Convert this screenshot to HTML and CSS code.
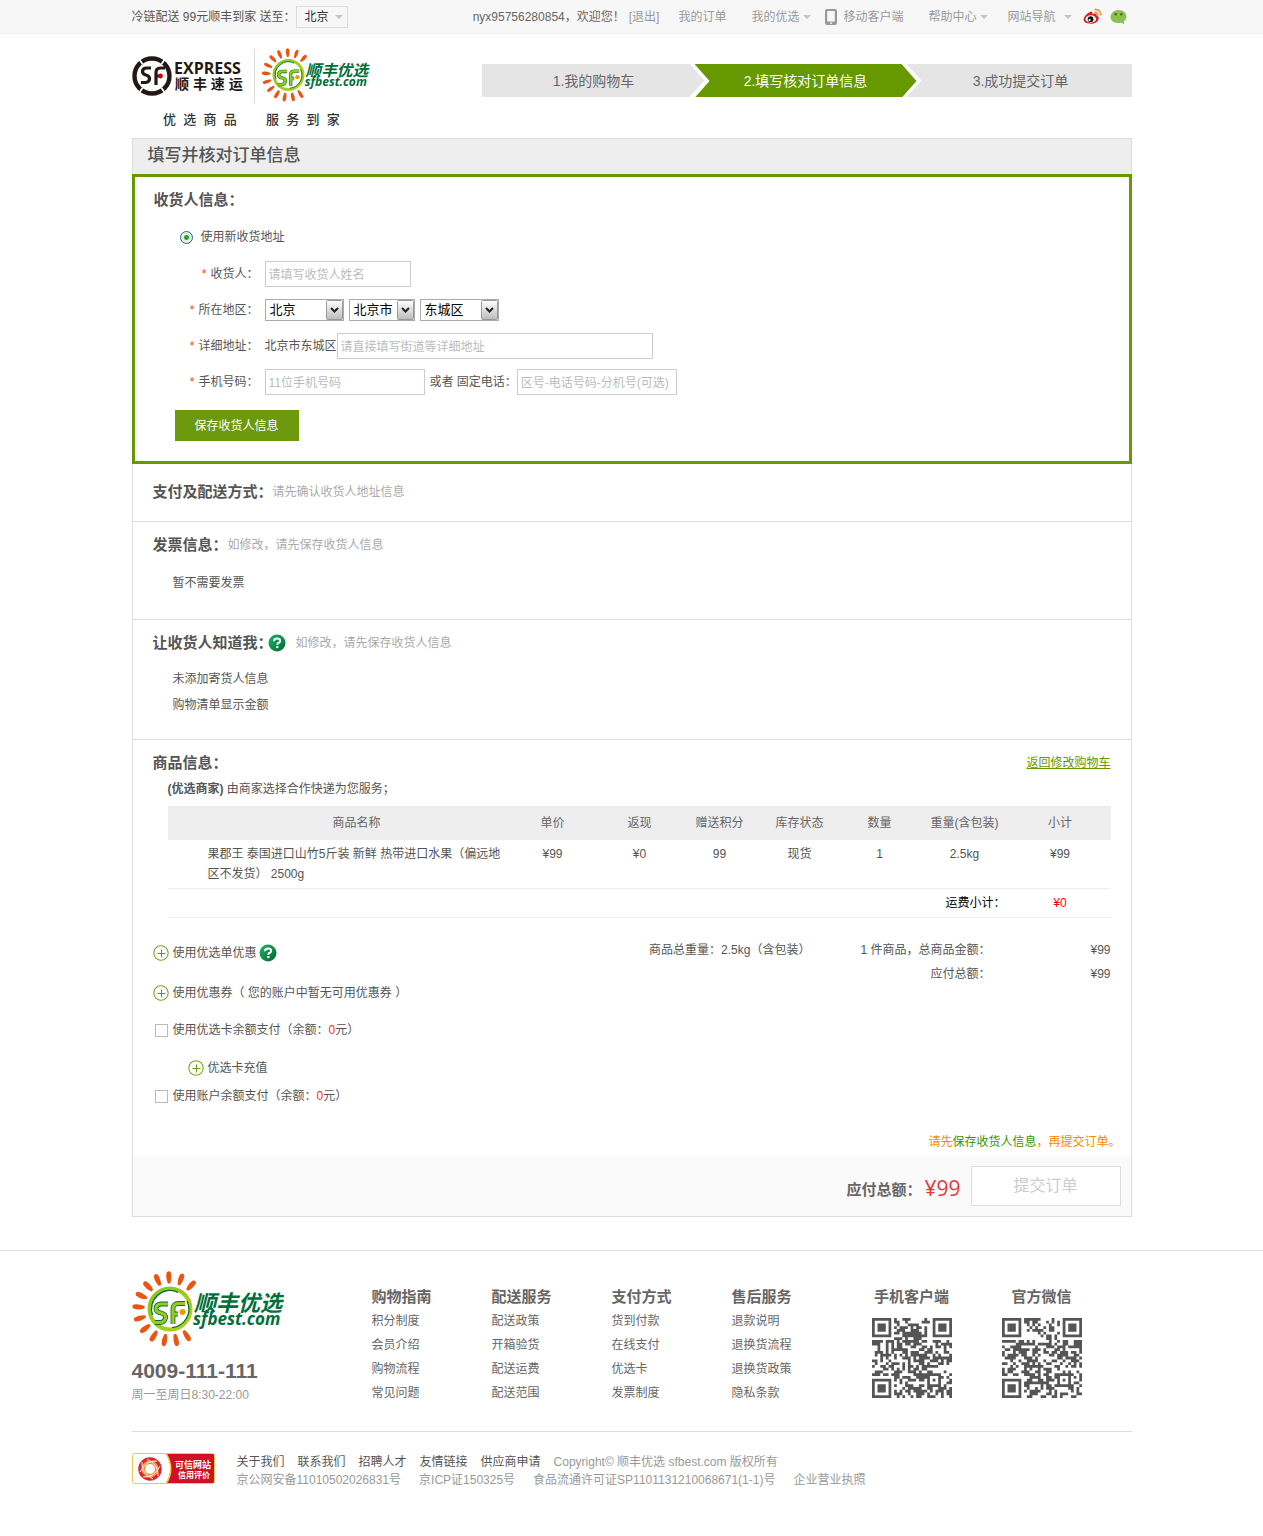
FILE: index.html
```html
<!DOCTYPE html>
<html lang="zh-CN">
<head>
<meta charset="utf-8">
<meta name="viewport" content="width=device-width, initial-scale=1">
<title>填写核对订单信息 - 顺丰优选</title>
<link rel="stylesheet" href="styles.css">
</head>
<body>
<svg class="defs" width="0" height="0" aria-hidden="true">
  <defs>
    <linearGradient id="help-fill" x1="0" y1="0" x2="1" y2="1"><stop offset="0" stop-color="#1cb56c"/><stop offset="1" stop-color="#04672f"/></linearGradient>
    <linearGradient id="leaf" x1="0" y1="0" x2="1" y2="1"><stop offset="0" stop-color="#8dc21f"/><stop offset="1" stop-color="#b5d215"/></linearGradient>
    <path id="ray" d="M-1.200 -25.500 Q-3.600 -32 -2 -36.500 Q0 -39 2 -36.500 Q3.400 -32 1.200 -25.500 Z" fill="#ea5514"/>
    <symbol id="help" viewBox="0 0 18 18">
      <circle cx="9" cy="9" r="8.5" fill="url(#help-fill)"/>
      <path d="M6 7.2 Q6 4.6 9.1 4.6 Q12.1 4.6 12.1 6.9 Q12.1 8.2 10.4 9 Q9.3 9.6 9.3 10.8" fill="none" stroke="#fff" stroke-width="2"/>
      <rect x="8.2" y="12" width="2.2" height="2.1" fill="#fff"/>
    </symbol>
    <symbol id="plus" viewBox="0 0 16 16">
      <circle cx="8" cy="8" r="7.2" fill="none" stroke="#7aa81c" stroke-width="1.1"/>
      <path d="M4.5 8.5h8M8.5 4.5v8" stroke="#6a9c10" stroke-width="1"/>
    </symbol>
    <path id="sf-mark" d="M-2 -5H-9Q-14 -4.500 -14 -0.500Q-14 3 -9 4Q-4 5 -4.500 9Q-5.500 13.500 -10 13.500H-15 M3 15V0Q3 -5.500 8.500 -5.500H15 M3 5H8"/>
    <symbol id="sfbest" viewBox="0 0 152 76">
      <g transform="translate(38 38)">
        <use href="#ray" transform="rotate(42)"/><use href="#ray" transform="rotate(20)"/>
        <use href="#ray" transform="rotate(-2)"/><use href="#ray" transform="rotate(-23)"/>
        <use href="#ray" transform="rotate(-44)"/><use href="#ray" transform="rotate(-65)"/>
        <use href="#ray" transform="rotate(-86)"/><use href="#ray" transform="rotate(-107)"/>
        <use href="#ray" transform="rotate(-128)"/><use href="#ray" transform="rotate(-149)"/>
        <use href="#ray" transform="rotate(-170)"/><use href="#ray" transform="rotate(169)"/>
        <use href="#ray" transform="rotate(148)"/>
        <circle r="20.5" fill="#fff" stroke="url(#leaf)" stroke-width="4"/>
        <path d="M-17.500 6 A18.500 18.500 0 0 1 8 -16.700 M17 -8 A18.500 18.500 0 0 1 2 18.600" fill="none" stroke="#00703a" stroke-width="1.300"/>
        <use href="#sf-mark" fill="none" stroke="#00703a" stroke-width="4.800"/>
        <use href="#sf-mark" fill="none" stroke="#9aca1c" stroke-width="3.200"/>
        <circle cx="12.500" cy="3" r="3" fill="#f39800"/>
      </g>
      <text class="logo-cn" x="62" y="40">顺丰优选</text>
      <text class="logo-en" x="61" y="54">sfbest.com</text>
    </symbol>
  </defs>
</svg>

<div class="topbar">
  <div class="wrap topbar-row">
    <span class="deliver">冷链配送 99元顺丰到家 送至：</span>
    <button class="city" type="button">北京<i class="caret"></i></button>
    <nav class="topnav" aria-label="用户">
      <span class="hello">nyx95756280854，欢迎您！</span>
      <a href="#">[退出]</a>
      <a class="ml-19" href="#">我的订单</a>
      <a class="ml-25" href="#">我的优选<i class="caret near"></i></a>
      <a class="ml-14 with-icon" href="#"><svg width="12" height="16" viewBox="0 0 12 16"><path fill-rule="evenodd" fill="#999" d="M2 0h8q2 0 2 2v12q0 2-2 2H2q-2 0-2-2V2q0-2 2-2zM2.200 2v10.500h7.600V2zM5 13.500v1.200h2v-1.200z"/></svg>移动客户端</a>
      <a class="ml-25" href="#">帮助中心<i class="caret near"></i></a>
      <a class="ml-19" href="#">网站导航<i class="caret"></i></a>
      <a class="ml-11 icon-link" href="#" aria-label="微博"><svg width="19" height="17" viewBox="0 0 19 17"><path d="M8 3.500Q10 3.300 9.500 6Q14 4.500 13.600 7.500Q16.500 8.500 15.500 11.500Q13.500 15.800 7.800 15.800Q0.500 15.300 0.500 11.200Q1.500 6.500 8 3.500z" fill="#d81e1e"/><ellipse cx="7.800" cy="11" rx="5.300" ry="3.700" fill="#fff"/><circle cx="7.600" cy="11.200" r="2.900" fill="#111"/><circle cx="6.600" cy="12" r="1.100" fill="#fff"/><path d="M11.500 4.200Q14.800 4 15 7.500M11.500 1.500Q17.800 1 17.800 7.500" fill="none" stroke="#ee8a22" stroke-width="1.500"/></svg></a>
      <a class="ml-8 icon-link" href="#" aria-label="微信"><svg width="17" height="16" viewBox="0 0 17 16"><path d="M8.500 1C13 1 16.500 3.800 16.500 7.500Q16.500 10.800 13.800 12.600L14.200 15.200L11.300 13.700Q4 15 1.200 10.800Q-0.800 6.500 2.800 3Q5 1 8.500 1z" fill="#8cc152"/><circle cx="5.700" cy="5.300" r="1.300" fill="#466f22"/><circle cx="11.300" cy="5.300" r="1.300" fill="#466f22"/></svg></a>
    </nav>
  </div>
</div>

<header class="wrap header">
  <a class="brand" href="#" aria-label="顺丰优选">
    <svg width="240" height="82" viewBox="0 0 240 82">
      <g transform="translate(20 28)">
        <circle r="17.500" fill="none" stroke="#231815" stroke-width="4.400"/>
        <path d="M-13 -17L-9.500 -12M13 -17L9.500 -12M-13 17L-9.500 12M13 17L9.500 12" stroke="#fff" stroke-width="1.800"/>
        <path d="M-1 -8H-6Q-9.500 -7.500 -9.500 -4.500Q-9.500 -2 -6 -1Q-2 0 -2.500 3.500Q-3.500 6.500 -6.500 6.500H-11M4 9V-3.500Q4 -8 8.500 -8H13M4 0H8" fill="none" stroke="#231815" stroke-width="3.200"/>
        <circle cx="8.500" cy="0" r="2.400" fill="#d7000f"/>
      </g>
      <text class="sf-en" x="42" y="26">EXPRESS</text>
      <text class="sf-cn" x="43" y="41">顺 丰 速 运</text>
      <path d="M122.500 1v54" stroke="#ddd"/>
      <use href="#sfbest" x="129" y="0" width="109" height="54"/>
      <text class="slogan" x="31" y="76">优&#160; 选&#160; 商&#160; 品</text>
      <text class="slogan" x="134" y="76">服&#160; 务&#160; 到&#160; 家</text>
    </svg>
  </a>
  <ol class="steps">
    <li class="step first">1.我的购物车</li>
    <li class="step current"><span>2.填写核对订单信息</span></li>
    <li class="step last">3.成功提交订单</li>
  </ol>
</header>

<main class="wrap order">
  <h1>填写并核对订单信息</h1>

  <form class="receiver">
    <h2>收货人信息：</h2>
    <label class="use-new"><input class="radio" type="radio" name="addr" checked>使用新收货地址</label>
    <div class="field">
      <label class="name" for="who"><b>*</b>收货人：</label>
      <input class="text w-who" id="who" type="text" placeholder="请填写收货人姓名">
    </div>
    <div class="field">
      <label class="name" for="province"><b>*</b>所在地区：</label>
      <div class="selects">
        <select class="w-wide" id="province"><option>北京</option></select>
        <select class="w-slim" aria-label="城市"><option>北京市</option></select>
        <select class="w-wide" aria-label="区县"><option>东城区</option></select>
      </div>
    </div>
    <div class="field">
      <label class="name" for="street"><b>*</b>详细地址：</label>
      <span>北京市东城区</span><input class="text w-street" id="street" type="text" placeholder="请直接填写街道等详细地址">
    </div>
    <div class="field">
      <label class="name" for="mobile"><b>*</b>手机号码：</label>
      <input class="text w-phone" id="mobile" type="text" placeholder="11位手机号码">
      <label class="or" for="tel">或者 固定电话：</label>
      <input class="text w-phone" id="tel" type="text" placeholder="区号-电话号码-分机号(可选)">
    </div>
    <button class="save" type="button">保存收货人信息</button>
  </form>

  <section class="block pay">
    <div class="block-head"><h2>支付及配送方式：</h2><span class="hint">请先确认收货人地址信息</span></div>
  </section>

  <section class="block invoice">
    <div class="block-head"><h2>发票信息：</h2><span class="hint">如修改，请先保存收货人信息</span></div>
    <p>暂不需要发票</p>
  </section>

  <section class="block sender">
    <div class="block-head"><h2>让收货人知道我：</h2><svg class="help-icon" width="18" height="18"><use href="#help"/></svg><span class="hint">如修改，请先保存收货人信息</span></div>
    <p>未添加寄货人信息<br>购物清单显示金额</p>
  </section>

  <section class="goods">
    <div class="goods-head"><h2>商品信息：</h2><a href="#">返回修改购物车</a></div>
    <p class="merchant"><strong>(优选商家)</strong> 由商家选择合作快递为您服务；</p>
    <table>
      <colgroup><col class="c-name"><col class="c-price"><col class="c-std"><col class="c-std"><col class="c-std"><col class="c-std"><col class="c-weight"><col class="c-sum"></colgroup>
      <thead>
        <tr><th class="item">商品名称</th><th>单价</th><th>返现</th><th>赠送积分</th><th>库存状态</th><th>数量</th><th>重量(含包装)</th><th>小计</th></tr>
      </thead>
      <tbody>
        <tr><td class="item">果郡王 泰国进口山竹5斤装 新鲜 热带进口水果（偏远地区不发货） 2500g</td><td>¥99</td><td>¥0</td><td>99</td><td>现货</td><td>1</td><td>2.5kg</td><td>¥99</td></tr>
      </tbody>
      <tfoot>
        <tr><td class="freight" colspan="7">运费小计：</td><td class="zero">¥0</td></tr>
      </tfoot>
    </table>
    <div class="settle">
      <div class="options">
        <div class="option"><button type="button"><svg width="16" height="16"><use href="#plus"/></svg>使用优选单优惠</button><svg width="18" height="18"><use href="#help"/></svg></div>
        <div class="option coupon"><button type="button"><svg width="16" height="16"><use href="#plus"/></svg>使用优惠券（ 您的账户中暂无可用优惠券 ）</button></div>
        <label class="option card"><input class="check" type="checkbox"><span>使用优选卡余额支付（余额：<em>0</em>元）</span></label>
        <div class="option recharge"><button type="button"><svg width="16" height="16"><use href="#plus"/></svg>优选卡充值</button></div>
        <label class="option balance"><input class="check" type="checkbox"><span>使用账户余额支付（余额：<em>0</em>元）</span></label>
      </div>
      <div class="totals">
        <span>商品总重量：2.5kg（含包装）</span>
        <dl>
          <dt><i>1</i> 件商品，总商品金额：</dt><dd>¥99</dd>
          <dt>应付总额：</dt><dd>¥99</dd>
        </dl>
      </div>
    </div>
    <p class="notice">请先<a href="#">保存收货人信息</a>，再提交订单。</p>
  </section>

  <div class="submit-bar">
    <strong>应付总额：</strong><span class="amount">¥99</span>
    <button type="button">提交订单</button>
  </div>
</main>

<footer class="footer">
  <div class="wrap">
    <div class="foot-main">
      <div class="contact">
        <svg width="152" height="76"><use href="#sfbest"/></svg>
        <strong>4009-111-111</strong>
        <span>周一至周日8:30-22:00</span>
      </div>
      <nav class="foot-col"><h3>购物指南</h3><a href="#">积分制度</a><a href="#">会员介绍</a><a href="#">购物流程</a><a href="#">常见问题</a></nav>
      <nav class="foot-col"><h3>配送服务</h3><a href="#">配送政策</a><a href="#">开箱验货</a><a href="#">配送运费</a><a href="#">配送范围</a></nav>
      <nav class="foot-col"><h3>支付方式</h3><a href="#">货到付款</a><a href="#">在线支付</a><a href="#">优选卡</a><a href="#">发票制度</a></nav>
      <nav class="foot-col"><h3>售后服务</h3><a href="#">退款说明</a><a href="#">退换货流程</a><a href="#">退换货政策</a><a href="#">隐私条款</a></nav>
      <div class="qr-box"><h3>手机客户端</h3><svg class="qr" data-seed="7" width="80" height="80" viewBox="0 0 29 29"></svg></div>
      <div class="qr-box second"><h3>官方微信</h3><svg class="qr" data-seed="23" width="80" height="80" viewBox="0 0 29 29"></svg></div>
    </div>
    <div class="foot-legal">
      <svg width="83" height="31" viewBox="0 0 83 31">
        <rect x="0.500" y="0.500" width="82" height="30" rx="2" fill="#fff" stroke="#f2c94f"/>
        <path d="M34 1H81Q82 1 82 2V29Q82 30 81 30H34Q43 16 34 1z" fill="#cf1126"/>
        <path d="M34.500 1Q43 16 34.500 30" fill="none" stroke="#f4c542" stroke-width="1.500"/>
        <g transform="translate(18 16)" fill="none">
          <circle r="10" stroke="#d9272e" stroke-width="3.500"/>
          <circle r="6.500" stroke="#f08a24" stroke-width="3"/>
          <path d="M-10 3Q-4 -9 7 -8M10 -3Q4 9 -7 8M-3 -10Q9 -4 8 7M3 10Q-9 4 -8 -7" stroke="#fff" stroke-width="1"/>
        </g>
        <text class="seal" x="43" y="15">可信网站</text>
        <text class="seal small" x="46" y="25">信用评价</text>
      </svg>
      <div class="legal-lines">
        <p><a href="#">关于我们</a><a href="#">联系我们</a><a href="#">招聘人才</a><a href="#">友情链接</a><a href="#">供应商申请</a><span>Copyright© 顺丰优选 sfbest.com 版权所有</span></p>
        <p class="permits"><span>京公网安备11010502026831号</span><span>京ICP证150325号</span><span>食品流通许可证SP1101131210068671(1-1)号</span><span>企业营业执照</span></p>
      </div>
    </div>
  </div>
</footer>
<script src="qr.js"></script>
</body>
</html>
```
FILE: styles.css
```css
* { box-sizing: border-box; }
body, h1, h2, h3, p, ol, dl, dd { margin: 0; padding: 0; }
body {
  background: #fff;
  color: #555;
  font: 12px/20px "Liberation Sans", "Noto Sans CJK SC", sans-serif;
}
button, input, select { font: inherit; color: inherit; margin: 0; }
button { border: 0; padding: 0; background: none; cursor: pointer; }
a { color: inherit; text-decoration: none; }
i, em { font-style: normal; }
svg { display: block; flex: none; }
.defs { position: absolute; }
.wrap { max-width: 1000px; margin: 0 auto; }

/* top bar */
.topbar { background: #f7f7f7; border-bottom: 1px solid #eee; }
.topbar-row { display: flex; align-items: center; height: 33px; white-space: nowrap; }
.deliver { color: #555; }
.city {
  display: flex; align-items: center; justify-content: space-between;
  width: 52px; height: 22px; padding: 0 4px 0 8px;
  border: 1px solid #ddd; color: #333;
}
.caret { display: inline-block; border: 4px solid transparent; border-top-color: #c4c4c4; border-bottom: 0; vertical-align: 2px; margin-left: 8px; }
.caret.near { margin-left: 4px; }
.city .caret { margin: 0; }
.topnav { display: flex; align-items: center; margin-left: auto; padding-right: 5px; color: #999; }
.hello { color: #666; margin-right: 4px; }
.ml-8 { margin-left: 8px; }
.ml-11 { margin-left: 11px; }
.ml-14 { margin-left: 14px; }
.ml-19 { margin-left: 19px; }
.ml-25 { margin-left: 25px; }
.with-icon { display: flex; align-items: center; gap: 6px; }

/* header */
.header { display: flex; justify-content: space-between; padding: 14px 0 8px; }
.brand { flex: none; }
.logo-cn { font: italic bold 22px "Noto Sans CJK SC", sans-serif; fill: #00703a; }
.logo-en { font: italic bold 17px "Open Sans", sans-serif; fill: #00703a; }
.sf-en { font: bold 16px "Open Sans", sans-serif; fill: #231815; }
.sf-cn { font: bold 14px "Liberation Sans", "Noto Sans CJK SC", sans-serif; fill: #231815; }
.slogan { font: 500 13px "Liberation Sans", "Noto Sans CJK SC", sans-serif; fill: #333; }
.steps {
  display: flex; width: 650px; height: 33px; margin-top: 16px;
  background: #e5e5e5; list-style: none;
  font-size: 14px; line-height: 34px; text-align: center; color: #666;
}
.first { width: 208px; padding-left: 16px; }
.last { flex: 1; padding-right: 12px; }
.current { width: 232px; padding: 0 5px; background: #fff; color: #fff; }
.current span { display: block; background: #690; }
.current, .current span { clip-path: polygon(0 0, calc(100% - 15px) 0, 100% 50%, calc(100% - 15px) 100%, 0 100%, 15px 50%); }

/* order panel */
.order { border: 1px solid #ddd; }
h1 { height: 35px; padding-left: 15px; background: #eee; font-size: 17px; font-weight: 500; line-height: 33px; }
h2 { font-size: 15px; line-height: 20px; }
.receiver { margin: 0 -1px; padding: 13px 19px 20px 0; border: 3px solid #690; }
.receiver h2 { margin-left: 19px; }
.use-new { display: flex; align-items: center; gap: 8px; margin: 17px 0 9px 45px; }
.radio {
  appearance: none; width: 13px; height: 13px; border: 1px solid #33608f; border-radius: 50%;
  background: radial-gradient(circle, #2aa52a 0 2px, #e6ece6 3px);
}
.field { display: flex; align-items: center; height: 36px; }
.name { display: flex; justify-content: flex-end; gap: 4px; width: 124px; margin-right: 6px; }
.name b { color: #f40; font-weight: normal; }
.text { height: 26px; padding: 2px 3px 0; border: 1px solid #ccc; background: #fff; outline: 0; }
.text::placeholder { color: #bbb; opacity: 1; }
.w-who { width: 146px; }
.w-street { width: 316px; }
.w-phone { width: 160px; }
.or { margin-left: 5px; }
.selects { display: flex; gap: 5px; }
select {
  appearance: none; height: 22px; padding: 0 20px 0 4px; border: 1px solid #aaa; border-radius: 0;
  color: #000; font-size: 13px; line-height: 20px;
  background: #fff url("data:image/svg+xml,%3Csvg xmlns='http://www.w3.org/2000/svg' width='17' height='20'%3E%3ClinearGradient id='g' x2='0' y2='1'%3E%3Cstop stop-color='%23fff'/%3E%3Cstop offset='1' stop-color='%23bbb'/%3E%3C/linearGradient%3E%3Crect x='.5' y='.5' width='16' height='19' rx='1' fill='url(%23g)' stroke='%23999'/%3E%3Cpath d='M5 8l3.500 3.500L12 8' fill='none' stroke='%23222' stroke-width='2'/%3E%3C/svg%3E") right center no-repeat;
}
.w-wide { width: 79px; }
.w-slim { width: 66px; }
.save { width: 124px; height: 31px; margin: 10px 0 0 40px; background: #6c990d; color: #fff; }

/* summary blocks */
.block { padding: 13px 20px 0; border-bottom: 1px solid #ddd; }
.block-head { display: flex; align-items: center; height: 20px; }
.block p { padding-left: 20px; }
.hint { color: #aaa; }
.pay { padding: 18px 20px 19px; }
.invoice { padding-bottom: 26px; }
.invoice p { margin-top: 18px; }
.sender { padding-bottom: 21px; }
.sender p { margin-top: 13px; line-height: 26px; }
.help-icon { margin: 0 10px 0 -5px; }

/* goods */
.goods { padding: 13px 20px 4px; }
.goods-head { display: flex; justify-content: space-between; }
.goods-head a { color: #690; text-decoration: underline; }
.merchant { margin: 6px 0 7px 15px; }
table { width: calc(100% - 15px); margin-left: 15px; border-collapse: collapse; table-layout: fixed; text-align: center; }
.c-price { width: 94px; }
.c-std { width: 80px; }
.c-weight { width: 90px; }
.c-sum { width: 101px; }
th { height: 34px; padding: 0; background: #eee; color: #666; font-weight: normal; }
td { padding: 4px 0; border-bottom: 1px solid #eee; vertical-align: top; }
.item { padding-left: 40px; }
td.item { text-align: left; }
.freight { padding-right: 4px; text-align: right; color: #000; }
.zero { color: #f00; }
.settle { display: flex; justify-content: space-between; }
.options { padding-top: 25px; }
.option { display: flex; align-items: center; gap: 2px; height: 20px; }
.option button { display: flex; align-items: center; gap: 4px; }
.option em { color: #f30; }
.coupon { margin-top: 20px; }
.card { margin-top: 17px; gap: 5px; padding-left: 2px; }
.recharge { margin: 18px 0 8px 35px; }
.balance { gap: 5px; padding-left: 2px; }
.check { appearance: none; width: 13px; height: 13px; border: 1px solid #bbb; background: #fff; }
.totals { display: flex; gap: 50px; padding-top: 20px; line-height: 24px; }
.totals dl { display: grid; grid-template-columns: auto 120px; align-content: start; text-align: right; }
.notice { margin: 26px -10px 0 0; text-align: right; color: #f80; }
.notice a { color: #390; }
.submit-bar {
  display: flex; align-items: center; justify-content: flex-end; height: 60px;
  padding-right: 10px; background: #fafafa;
}
.submit-bar strong { padding-top: 8px; font-size: 15px; color: #666; }
.amount { padding: 4px 10px 0 3px; color: #e4393c; font-family: "Open Sans", sans-serif; font-size: 21px; }
.submit-bar button { width: 150px; height: 40px; border: 1px solid #ddd; background: #fff; color: #ccc; font-size: 16px; }

/* footer */
.footer { margin-top: 33px; border-top: 1px solid #ddd; }
.foot-main { display: flex; height: 181px; padding-top: 20px; border-bottom: 1px solid #ddd; color: #666; }
.contact { display: flex; flex-direction: column; width: 240px; }
.contact strong { margin-top: 14px; font-size: 21px; }
.contact span { margin-top: 4px; color: #999; }
.foot-col { display: flex; flex-direction: column; width: 120px; padding-top: 14px; line-height: 24px; }
h3 { font-size: 15px; line-height: 24px; }
.qr-box { display: flex; flex-direction: column; align-items: center; gap: 9px; width: 80px; padding-top: 14px; margin-left: 20px; }
.qr-box.second { margin-left: 50px; }
.qr { fill: #555; }
.foot-legal { display: flex; gap: 22px; padding: 21px 0 52px; }
.seal { font: bold 9px "Noto Sans CJK SC", sans-serif; fill: #fff; }
.seal.small { font-size: 8px; }
.legal-lines { line-height: 18px; color: #999; }
.legal-lines p { display: flex; gap: 13px; }
.legal-lines .permits { gap: 18px; }
.legal-lines a { color: #555; }
```
FILE: qr.js
```js
// Draws a 29-module code into every .qr element.
document.querySelectorAll('.qr').forEach(function (svg) {
  var n = 29, state = Number(svg.dataset.seed), d = '';
  function bit() {
    state = (state * 1103515245 + 12345) % 2147483648;
    return (state >> 16) % 100 < 52;
  }
  function square(x, y, left, top, size) {
    var dx = x - left, dy = y - top;
    if (dx < -1 || dy < -1 || dx > size || dy > size) return null;
    var mid = (size - 1) / 2, r = Math.max(Math.abs(dx - mid), Math.abs(dy - mid));
    return r === mid || r <= mid - 2;
  }
  for (var y = 0; y < n; y++) {
    for (var x = 0; x < n; x++) {
      var on = bit();
      [[0, 0, 7], [n - 7, 0, 7], [0, n - 7, 7]].forEach(function (f) {
        var v = square(x, y, f[0], f[1], f[2]);
        if (v !== null) on = v;
      });
      if (x >= 20 && x <= 24 && y >= 20 && y <= 24) on = square(x, y, 20, 20, 5);
      if (on) d += 'M' + x + ' ' + y + 'h1v1h-1z';
    }
  }
  var path = document.createElementNS('http://www.w3.org/2000/svg', 'path');
  path.setAttribute('d', d);
  svg.appendChild(path);
});
```
